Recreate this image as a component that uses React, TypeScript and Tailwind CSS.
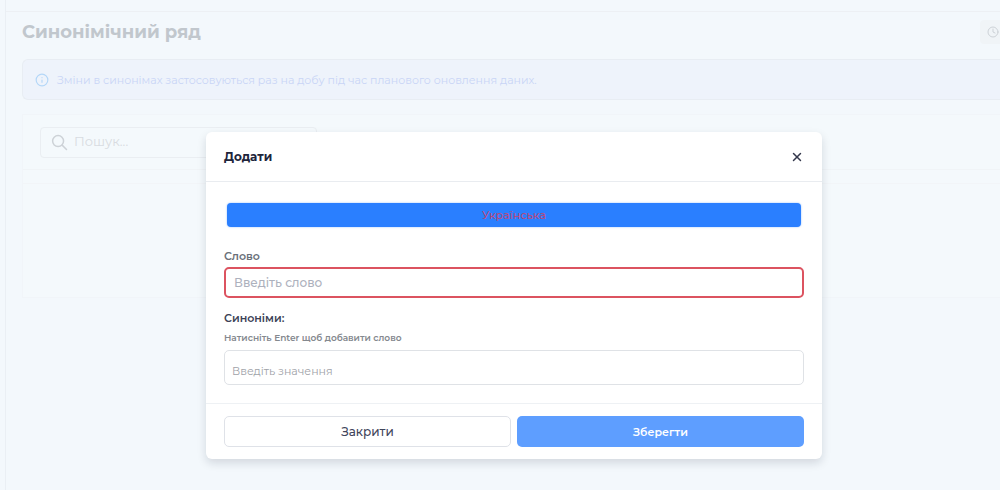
import { useState } from 'react';
import { Clock, Info, X } from 'lucide-react';

interface AddSynonymModalProps {
  onClose: () => void;
}

function SearchIcon() {
  return (
    <svg width="17" height="17" viewBox="0 0 18 18" fill="none" stroke="currentColor" strokeWidth="1.6" strokeLinecap="round" className="shrink-0 text-[#cdd2d7]">
      <circle cx="7.5" cy="7.5" r="5.8" />
      <path d="M11.8 11.8 16.4 16.4" />
    </svg>
  );
}

function AddSynonymModal({ onClose }: AddSynonymModalProps) {
  const [word, setWord] = useState('');
  const [value, setValue] = useState('');

  return (
    <div className="absolute inset-0 flex items-start justify-center pt-[132px] pl-7">
      <div
        role="dialog"
        aria-modal="true"
        aria-labelledby="modal-title"
        className="w-full max-w-[616px] rounded-md bg-white shadow-[0_4px_10px_rgba(15,23,42,0.14)]"
      >
        <div className="flex h-[50px] items-center justify-between border-b border-[#e9ecf0] px-[18px]">
          <h2 id="modal-title" className="text-[12px] leading-4 font-bold text-[#20243a]">
            Додати
          </h2>
          <button type="button" onClick={onClose} aria-label="Закрити вікно" className="text-[#34384c]">
            <X size={14} strokeWidth={2.5} />
          </button>
        </div>

        <form onSubmit={(e) => e.preventDefault()}>
          <div className="px-[18px] pt-[18px] pb-[18px]">
            <div role="tablist" className="flex p-[3px]">
              <button
                type="button"
                role="tab"
                aria-selected="true"
                className="h-6 flex-1 rounded bg-[#2a7fff] text-[11px] leading-4 font-medium text-[#b84a7e] shadow-[0_0_2px_#8fbcff]"
              >
                Українська
              </button>
            </div>

            <label htmlFor="word" className="mt-[18px] block text-[11px] leading-4 font-semibold text-[#6a7079]">
              Слово
            </label>
            <input
              id="word"
              value={word}
              onChange={(e) => setWord(e.target.value)}
              placeholder="Введіть слово"
              className="mt-[3px] block h-[31px] w-full rounded-[5px] border-2 border-[#dc5360] px-2 text-[12px] font-medium text-[#20243a] outline-none placeholder:text-[#adb1bd]"
            />

            <label htmlFor="synonyms" className="mt-3 block text-[11px] leading-4 font-semibold text-[#3c4156]">
              Синоніми:
            </label>
            <p id="synonyms-hint" className="mt-1 text-[9px] leading-4 font-semibold text-[#85898f]">
              Натисніть Enter щоб добавити слово
            </p>
            <input
              id="synonyms"
              aria-describedby="synonyms-hint"
              value={value}
              onChange={(e) => setValue(e.target.value)}
              placeholder="Введіть значення"
              className="mt-1 block h-[35px] w-full rounded-[5px] border border-[#dfe2e6] px-[7px] pt-[6px] text-[11px] text-[#20243a] outline-none placeholder:text-[#a0a2a8]"
            />
          </div>

          <div className="grid grid-cols-2 gap-[6px] border-t border-[#eef1f4] px-[18px] py-3">
            <button
              type="button"
              onClick={onClose}
              className="h-[31px] rounded-[5px] border border-[#dfe2e8] text-[12px] leading-4 font-medium text-[#3f455b]"
            >
              Закрити
            </button>
            <button type="submit" className="h-[31px] rounded-[5px] bg-[#5e9eff] text-[11px] leading-4 font-semibold text-white">
              Зберегти
            </button>
          </div>
        </form>
      </div>
    </div>
  );
}

export default function App() {
  const [modalOpen, setModalOpen] = useState(true);

  return (
    <div className="relative flex min-h-screen overflow-hidden bg-[#f3f8fc] font-['Montserrat','Inter',sans-serif]">
      <aside className="w-[6px] shrink-0 border-r border-[#eaeff4]" />

      <main className="min-w-0 flex-1">
        <div className="h-3 border-b border-[#edf0f4]" />

        <div className="pl-4">
          <div className="flex h-[47px] items-center justify-between pb-2">
            <h1 className="text-[18px] leading-6 font-bold text-[#c1c7cd]">Синонімічний ряд</h1>
            <button
              type="button"
              aria-label="Історія"
              className="flex h-6 w-5 items-center justify-end rounded-l-sm bg-[#f0f4f7] pr-px text-[#cdd2d7]"
            >
              <Clock size={12} />
            </button>
          </div>

          <div className="flex h-[41px] items-center gap-2 rounded-l-md border-y border-l border-[#e8edf3] bg-[#eef3fb] pl-3">
            <Info size={14} className="shrink-0 text-[#b4d7f8]" />
            <p className="text-[11px] leading-4 text-[#c9d5f6]">
              Зміни в синонімах застосовуються раз на добу під час планового оновлення даних.
            </p>
          </div>

          <section className="mt-[14px] h-[184px] border-y border-l border-[#f1f5f9] bg-[#f4f9fc]">
            <div className="flex h-[55px] items-center border-b border-[#f0f4f7] pl-[17px]">
              <label className="flex h-[31px] w-[277px] items-center gap-[6px] rounded border border-[#eaeef2] pl-[10px]">
                <SearchIcon />
                <input
                  type="search"
                  aria-label="Пошук"
                  placeholder="Пошук..."
                  className="min-w-0 flex-1 bg-transparent text-[13px] outline-none placeholder:text-[#d8dce1]"
                />
              </label>
            </div>
            <div className="h-[14px] border-b border-[#f2f5f8]" />
          </section>
        </div>
      </main>

      {modalOpen && <AddSynonymModal onClose={() => setModalOpen(false)} />}
    </div>
  );
}
